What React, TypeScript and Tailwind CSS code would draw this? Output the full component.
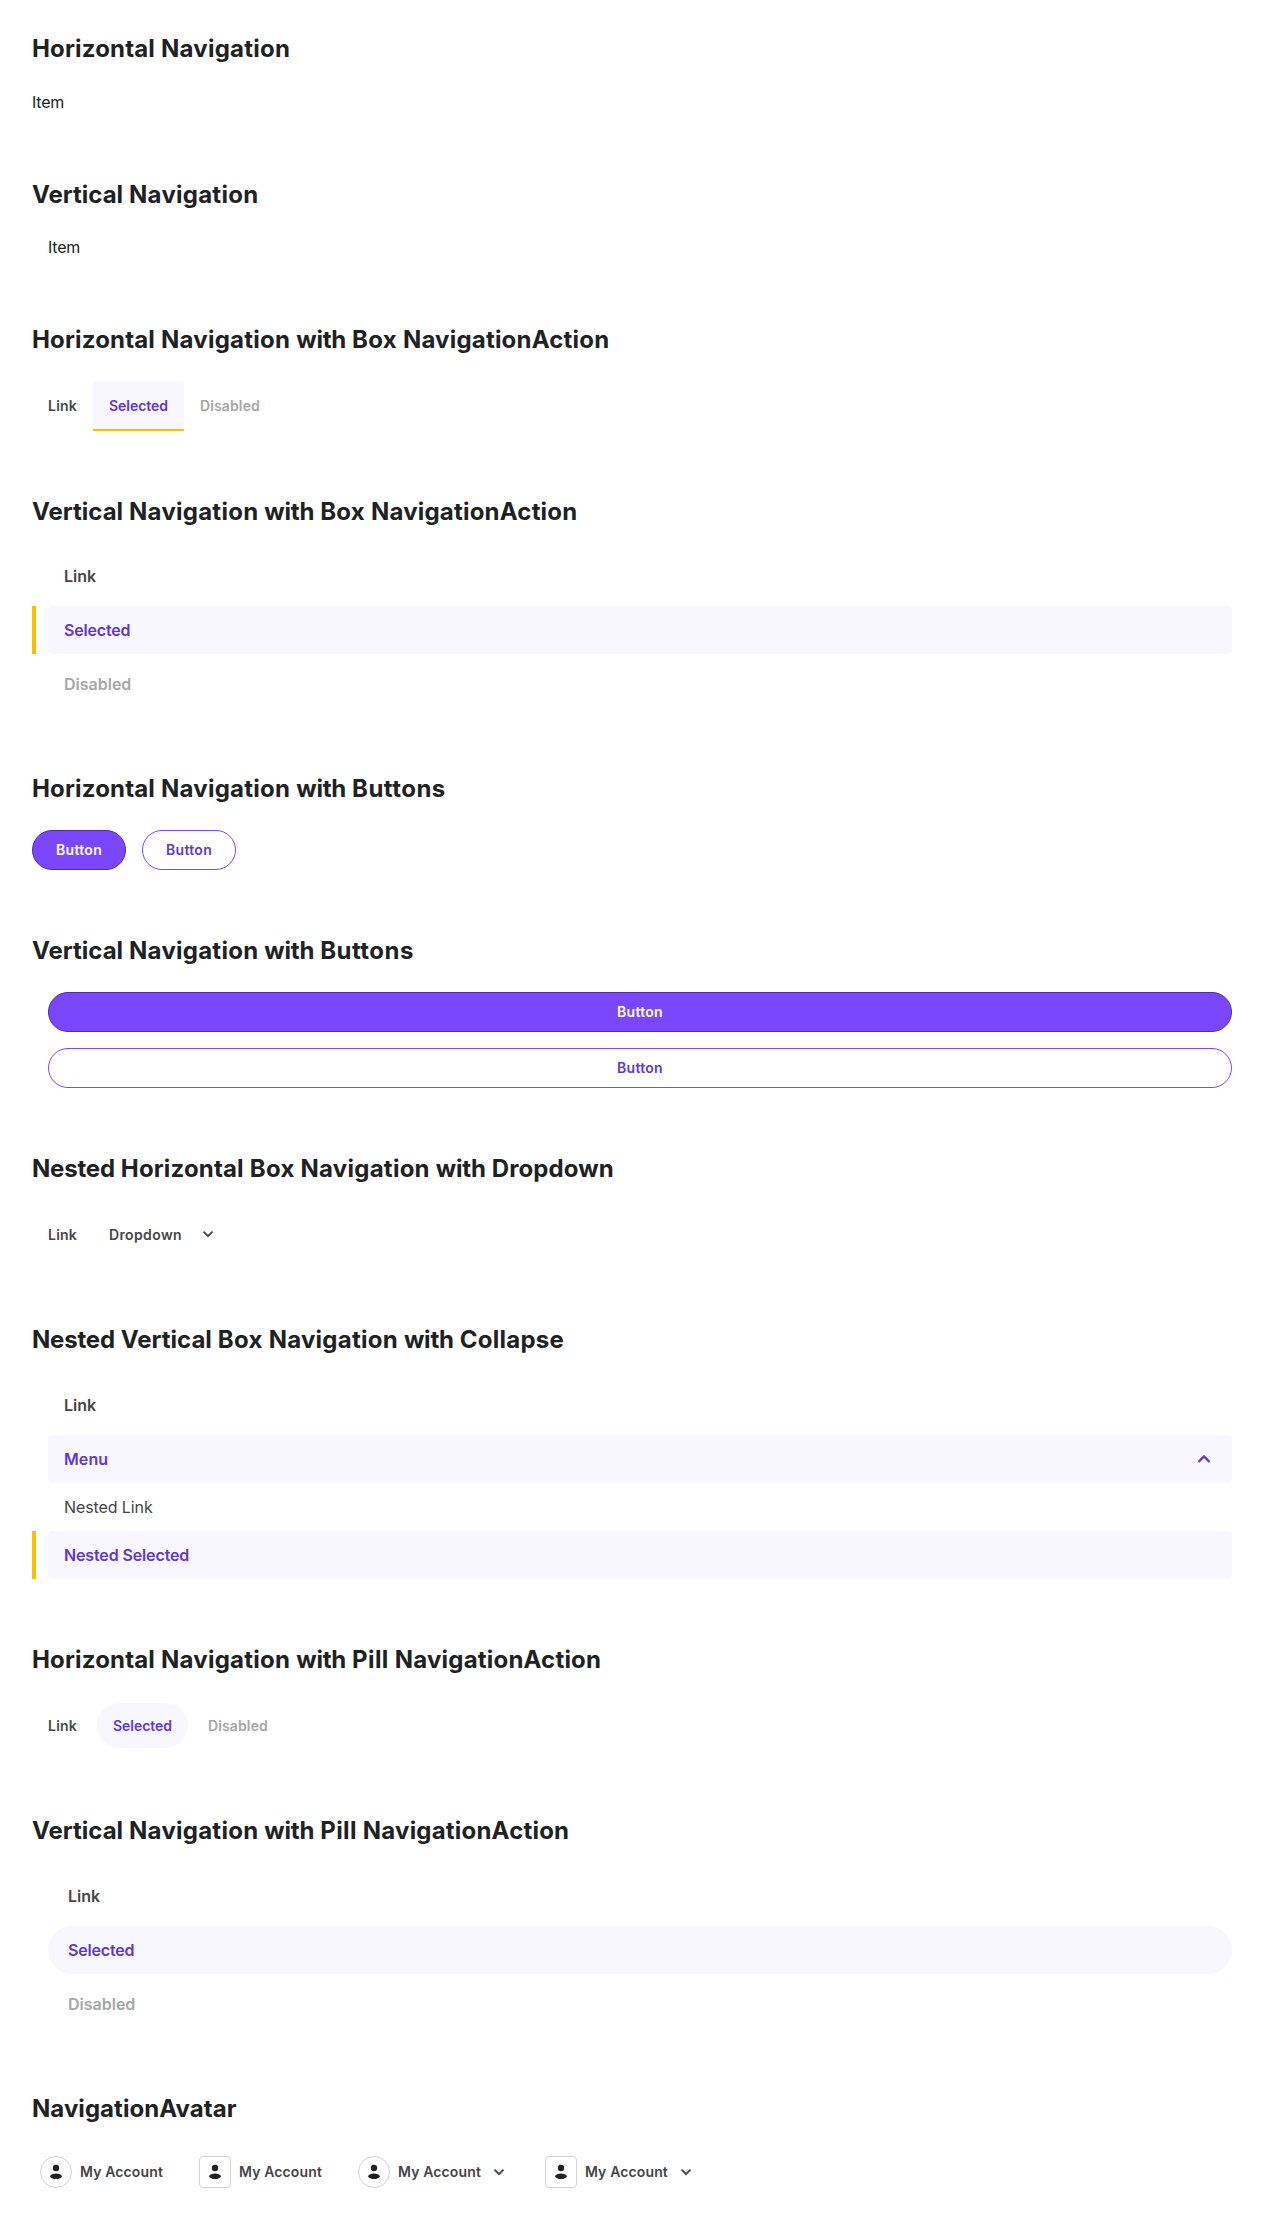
import { Fragment, type ReactNode } from 'react';

const wordTracking: Record<string, string> = {
  Horizontal: 'tracking-[0.16px]',
  Navigation: 'tracking-[0.25px]',
  Vertical: 'tracking-normal',
  with: 'tracking-[-0.2px]',
  Box: 'tracking-[0.25px]',
  NavigationAction: 'tracking-[0.2px]',
  Buttons: 'tracking-[0.45px]',
  Nested: 'tracking-[-0.2px]',
  Dropdown: 'tracking-[0.12px]',
  Collapse: 'tracking-[0.25px]',
  Pill: 'tracking-[0.4px]',
  NavigationAvatar: 'tracking-[0.05px]',
};

function Section({ title, children }: { title: string; children: ReactNode }) {
  return (
    <section className="mb-16 last:mb-0">
      <h2 className="mb-6 text-[24px] leading-[33.6px] font-bold text-[#202122] [word-spacing:0.3px]">
        {title.split(' ').map((word, i) => (
          <Fragment key={i}>
            {i > 0 && ' '}
            <span className={wordTracking[word]}>{word}</span>
          </Fragment>
        ))}
      </h2>
      {children}
    </section>
  );
}

function Chevron({ className }: { className: string }) {
  return (
    <svg
      viewBox="0 0 24 24"
      className={className}
      fill="currentColor"
      stroke="currentColor"
      strokeWidth="0.5"
      strokeLinejoin="round"
      aria-hidden="true"
    >
      <path d="M7.41 8.59 12 13.17l4.59-4.58L18 10l-6 6-6-6z" />
    </svg>
  );
}

function Avatar({ square, dropdown }: { square?: boolean; dropdown?: boolean }) {
  return (
    <a className="flex items-center gap-2 p-[6px_8px] text-[14px] leading-[21px] font-semibold text-[#454545]">
      <span
        className={`flex size-8 items-center justify-center border border-[#d4d4d4] text-[#202122] ${square ? 'rounded-[4px]' : 'rounded-full'}`}
      >
        <svg viewBox="0 0 20 20" className="size-5" fill="currentColor" aria-hidden="true">
          <circle cx="10" cy="6" r="3.2" />
          <path d="M4 14.200C4.700 12.500 7.200 11.600 10 11.600s5.300.9 6 2.600c-.5 1.900-3.200 2.800-6 2.800s-5.500-.9-6-2.800z" />
        </svg>
      </span>
      <span className="tracking-[0.13px]">My Account</span>
      {dropdown && <Chevron className="size-5" />}
    </a>
  );
}

type State = 'link' | 'selected' | 'disabled';

const stateColor: Record<State, string> = {
  link: 'text-[#454545]',
  selected: 'bg-[#f8f6ff] text-[#6038cc]',
  disabled: 'text-[#a6a6a6]',
};

const smallTracking: Record<State, string> = {
  link: 'tracking-[0.22px]',
  selected: 'tracking-[-0.04px]',
  disabled: 'tracking-[0.13px]',
};

function BoxAction({ state = 'link', children }: { state?: State; children: ReactNode }) {
  return (
    <a
      className={`flex h-[50px] items-center px-4 text-[14px] leading-[21px] font-semibold ${smallTracking[state]} ${stateColor[state]} ${state === 'selected' ? 'shadow-[inset_0_-2px_0_#ffbf00]' : ''}`}
    >
      {children}
    </a>
  );
}

function PillAction({ state = 'link', children }: { state?: State; children: ReactNode }) {
  return (
    <a
      className={`flex h-[45px] items-center rounded-full px-4 text-[14px] leading-[21px] font-semibold ${smallTracking[state]} ${stateColor[state]}`}
    >
      {children}
    </a>
  );
}

function VerticalAction({
  state = 'link',
  pill,
  marker,
  light,
  tracking = '',
  children,
}: {
  state?: State;
  pill?: boolean;
  marker?: boolean;
  light?: boolean;
  tracking?: string;
  children: ReactNode;
}) {
  return (
    <a
      className={`relative flex h-12 items-center justify-between text-[16px] leading-6 ${tracking} ${light ? 'font-normal' : 'font-semibold'} ${pill ? 'rounded-full px-5' : 'rounded-[4px] px-4'} ${stateColor[state]}`}
    >
      {marker && <span className="absolute inset-y-0 -left-4 w-1 bg-[#ffbf00]" />}
      {children}
    </a>
  );
}

function Button({ secondary }: { secondary?: boolean }) {
  return (
    <button
      className={`flex h-10 items-center justify-center rounded-full border px-[23px] text-[14px] leading-[21px] font-semibold tracking-[0.3px] ${secondary ? 'border-[#7a47ff] text-[#6038cc]' : 'border-[#4e2ea6] bg-[#7a47ff] text-white'}`}
    >
      Button
    </button>
  );
}

export default function App() {
  return (
    <main className="min-h-[2226px] bg-white px-8 pt-8 font-['Inter',sans-serif] text-[16px] leading-6 text-[#202122]">
      <div className="w-[1200px]">
        <Section title="Horizontal Navigation">
          <nav className="flex tracking-[-0.2px]">Item</nav>
        </Section>
        <Section title="Vertical Navigation">
          <nav className="pl-4 tracking-[-0.2px]">Item</nav>
        </Section>
        <Section title="Horizontal Navigation with Box NavigationAction">
          <nav className="flex">
            <BoxAction>Link</BoxAction>
            <BoxAction state="selected">Selected</BoxAction>
            <BoxAction state="disabled">Disabled</BoxAction>
          </nav>
        </Section>
        <Section title="Vertical Navigation with Box NavigationAction">
          <nav className="flex flex-col gap-1.5 pl-4">
            <VerticalAction>Link</VerticalAction>
            <VerticalAction state="selected" marker tracking="tracking-[-0.18px]">Selected</VerticalAction>
            <VerticalAction state="disabled">Disabled</VerticalAction>
          </nav>
        </Section>
        <Section title="Horizontal Navigation with Buttons">
          <nav className="flex gap-4">
            <Button />
            <Button secondary />
          </nav>
        </Section>
        <Section title="Vertical Navigation with Buttons">
          <nav className="flex flex-col gap-4 pl-4">
            <Button />
            <Button secondary />
          </nav>
        </Section>
        <Section title="Nested Horizontal Box Navigation with Dropdown">
          <nav className="flex">
            <BoxAction>Link</BoxAction>
            <BoxAction>
              <span className="tracking-[0.37px]">Dropdown</span>
              <Chevron className="ml-4 size-5" />
            </BoxAction>
          </nav>
        </Section>
        <Section title="Nested Vertical Box Navigation with Collapse">
          <nav className="flex flex-col pl-4">
            <VerticalAction>Link</VerticalAction>
            <div className="mt-1.5">
              <VerticalAction state="selected" tracking="tracking-[0.1px]">
                Menu
                <Chevron className="size-6 rotate-180" />
              </VerticalAction>
              <VerticalAction light tracking="tracking-[-0.1px]">Nested Link</VerticalAction>
              <VerticalAction state="selected" marker tracking="tracking-[-0.13px]">Nested Selected</VerticalAction>
            </div>
          </nav>
        </Section>
        <Section title="Horizontal Navigation with Pill NavigationAction">
          <nav className="flex h-[50px] items-center gap-1">
            <PillAction>Link</PillAction>
            <PillAction state="selected">Selected</PillAction>
            <PillAction state="disabled">Disabled</PillAction>
          </nav>
        </Section>
        <Section title="Vertical Navigation with Pill NavigationAction">
          <nav className="flex flex-col gap-1.5 pl-4">
            <VerticalAction pill>Link</VerticalAction>
            <VerticalAction pill state="selected" tracking="tracking-[-0.18px]">Selected</VerticalAction>
            <VerticalAction pill state="disabled">Disabled</VerticalAction>
          </nav>
        </Section>
        <Section title="NavigationAvatar">
          <nav className="flex gap-5">
            <Avatar />
            <Avatar square />
            <Avatar dropdown />
            <Avatar square dropdown />
          </nav>
        </Section>
      </div>
    </main>
  );
}
